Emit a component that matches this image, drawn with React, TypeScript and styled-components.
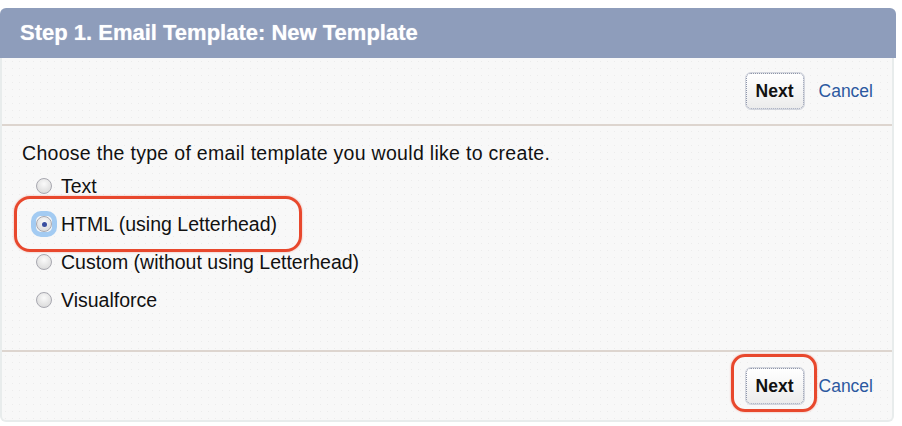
import React from "react";
import styled, { createGlobalStyle } from "styled-components";

const Global = createGlobalStyle`
  html, body { margin: 0; padding: 0; background: #ffffff; }
  body { font-family: "Liberation Sans", Arial, Helvetica, sans-serif; }
`;

const Panel = styled.div`
  margin-top: 8px;
  width: 896px;
  height: 414px;
  display: flex;
  flex-direction: column;
  position: relative;
`;

const Header = styled.div`
  height: 50px;
  flex: none;
  background: #8e9dbb;
  border-radius: 6px 6px 0 0;
  display: flex;
  align-items: center;
  padding-left: 20px;
  color: #ffffff;
  font-weight: bold;
  font-size: 22px;
  text-shadow: 0 0 1px rgba(255, 255, 255, 0.6);
  box-sizing: border-box;
`;

const Body = styled.div`
  flex: 1;
  display: flex;
  flex-direction: column;
  margin-right: 2px;
  border-left: 2px solid #e8ecec;
  border-right: 2px solid #e8ecec;
  border-bottom: 2px solid #e8ecec;
  border-radius: 0 0 6px 6px;
  background-color: #f8f8f8;
  background-image: radial-gradient(circle, #ececec 0.6px, transparent 0.9px);
  background-size: 7px 7px;
  position: relative;
`;

const ButtonBar = styled.div<{ $h: number; $line?: boolean }>`
  height: ${(p) => p.$h}px;
  flex: none;
  display: flex;
  align-items: center;
  justify-content: flex-end;
  padding-right: 19px;
  gap: 15px;
  box-sizing: border-box;
  border-bottom: ${(p) => (p.$line ? "2px solid #ddd5cf" : "none")};
  position: relative;
`;

const NextButton = styled.button`
  width: 58px;
  height: 36px;
  border: 1px dotted #8d95ab;
  outline: 1px solid rgba(141, 149, 171, 0.35);
  border-radius: 5px;
  background: linear-gradient(#ffffff, #ececec);
  font-family: "Liberation Sans", Arial, sans-serif;
  font-weight: bold;
  font-size: 17.5px;
  color: #111111;
  padding: 0;
  cursor: pointer;
`;

const CancelLink = styled.a`
  color: #2c58a0;
  font-size: 17.5px;
  text-decoration: none;
  cursor: pointer;
`;

const Content = styled.div`
  flex: 1;
  padding: 15px 0 0 22px;
  border-bottom: 2px solid #ddd5cf;
  position: relative;
  font-size: 19.5px;
  color: #111111;
`;

const Prompt = styled.div`
  height: 24px;
  line-height: 24px;
  margin: 0 0 2px -2px;
  letter-spacing: 0.3px;
`;

const Options = styled.div`
  display: flex;
  flex-direction: column;
  padding-left: 12px;
`;

const OptionRow = styled.label`
  display: flex;
  align-items: center;
  height: 38px;
  gap: 9px;
  cursor: pointer;
`;

const RadioWrap = styled.span<{ $focus?: boolean }>`
  width: 16px;
  height: 16px;
  display: inline-flex;
  align-items: center;
  justify-content: center;
  border-radius: ${(p) => (p.$focus ? "5px" : "50%")};
  box-shadow: ${(p) => (p.$focus ? "0 0 0 5px #a3cbf2" : "none")};
`;

const RadioDot = styled.span<{ $checked?: boolean }>`
  width: 14px;
  height: 14px;
  border-radius: 50%;
  border: 1px solid #a8a8b0;
  background: radial-gradient(circle at 50% 35%, #fafafa, #d4d4d4);
  display: inline-flex;
  align-items: center;
  justify-content: center;
  &::after {
    content: "";
    display: ${(p) => (p.$checked ? "block" : "none")};
    width: 5px;
    height: 5px;
    border-radius: 50%;
    background: #3a4fa0;
  }
`;

const Highlight = styled.div<{ $x: number; $y: number; $w: number; $h: number; $r: number }>`
  position: absolute;
  left: ${(p) => p.$x}px;
  top: ${(p) => p.$y}px;
  width: ${(p) => p.$w}px;
  height: ${(p) => p.$h}px;
  border: 3px solid #e8482d;
  border-radius: ${(p) => p.$r}px;
  box-sizing: border-box;
  pointer-events: none;
  box-shadow: 0 0 2px rgba(232, 72, 45, 0.5);
`;

const options = [
  { label: "Text", checked: false },
  { label: "HTML (using Letterhead)", checked: true },
  { label: "Custom (without using Letterhead)", checked: false },
  { label: "Visualforce", checked: false },
];

export default function App() {
  return (
    <>
      <Global />
      <Panel>
        <Header>Step 1. Email Template: New Template</Header>
        <Body>
          <ButtonBar $h={68} $line>
            <NextButton>Next</NextButton>
            <CancelLink>Cancel</CancelLink>
          </ButtonBar>
          <Content>
            <Prompt>Choose the type of email template you would like to create.</Prompt>
            <Options>
              {options.map((o) => (
                <OptionRow key={o.label}>
                  <RadioWrap $focus={o.checked}>
                    <RadioDot $checked={o.checked} />
                  </RadioWrap>
                  {o.label}
                </OptionRow>
              ))}
            </Options>
            <Highlight $x={12} $y={70} $w={288} $h={56} $r={16} />
          </Content>
          <ButtonBar $h={68}>
            <NextButton>Next</NextButton>
            <CancelLink>Cancel</CancelLink>
            <Highlight $x={729} $y={2} $w={86} $h={58} $r={14} />
          </ButtonBar>
        </Body>
      </Panel>
    </>
  );
}
